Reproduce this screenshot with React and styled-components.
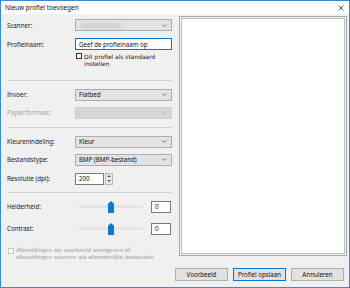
import React from 'react';
import styled, { createGlobalStyle } from 'styled-components';

const Global = createGlobalStyle`
  html, body { margin: 0; padding: 0; background: #ffffff; }
  body { font-family: "Noto Sans", "Open Sans", sans-serif; }
  * { box-sizing: border-box; }
`;

const FONT = `"Noto Sans", "Open Sans", "DejaVu Sans", sans-serif`;

const Window = styled.div`
  width: 350px;
  height: 288px;
  border: 1px solid #3a88d6;
  background: #f0f0f0;
  display: flex;
  flex-direction: column;
  font-family: ${FONT};
  font-size: 6.2px;
  color: #1b1b1b;
`;

const TitleBar = styled.div`
  height: 13px;
  background: #ffffff;
  display: flex;
  align-items: center;
  justify-content: space-between;
  padding: 0 5px 0 4px;
  font-size: 6.4px;
  color: #111;
`;

const Main = styled.div`
  height: 254px;
  display: flex;
`;

const LeftColumn = styled.div`
  width: 172px;
  padding: 5px 0 0 6px;
  display: flex;
  flex-direction: column;
`;

const FieldRow = styled.div`
  display: grid;
  grid-template-columns: 68px 97px;
  align-items: center;
  height: 12px;
  margin-top: ${p => p.$mt || 0}px;
`;

const Label = styled.span`
  color: ${p => (p.$disabled ? '#a3a3a3' : '#1b1b1b')};
  white-space: nowrap;
`;

const Combo = styled.div`
  height: 12px;
  border: 1px solid ${p => (p.$disabled ? '#cfcfcf' : '#adadad')};
  background: ${p => (p.$disabled ? '#d6d6d6' : '#e3e3e3')};
  display: flex;
  align-items: center;
  justify-content: space-between;
  padding: 0 4px 0 3px;
  color: #111;
  overflow: hidden;
`;

const Blurred = styled.span`
  display: block;
  width: 40px;
  height: 5px;
  background: #d2d2d2;
  filter: blur(1.2px);
  margin-left: 2px;
`;

const TextInput = styled.div`
  height: 12px;
  border: 1px solid ${p => (p.$focused ? '#0078d7' : '#7a7a7a')};
  background: #ffffff;
  display: flex;
  align-items: center;
  padding-left: 3px;
  width: ${p => (p.$w ? `${p.$w}px` : 'auto')};
  color: #111;
`;

const CheckRow = styled.div`
  display: flex;
  align-items: flex-start;
  gap: 2px;
  margin-top: ${p => p.$mt || 0}px;
  margin-left: ${p => p.$ml || 0}px;
  color: ${p => (p.$disabled ? '#9c9c9c' : '#1b1b1b')};
`;

const CheckText = styled.span`
  font-family: "DejaVu Sans", "Noto Sans", sans-serif;
  font-size: ${p => (p.$small ? 5.5 : 5.95)}px;
  line-height: 7px;
  margin-top: -0.5px;
`;

const CheckBox = styled.span`
  flex: none;
  width: 6px;
  height: 6px;
  border: 1px solid ${p => (p.$disabled ? '#c4c4c4' : '#333333')};
  background: #ffffff;
`;

const Separator = styled.div`
  height: 1px;
  background: #d2d2d2;
  margin: ${p => p.$mt || 0}px 0 0 1px;
  width: 164px;
`;

const SpinWrap = styled.div`
  display: flex;
  gap: 1px;
  height: 12px;
`;

const Spinner = styled.div`
  width: 8px;
  height: 12px;
  border: 1px solid #b8b8b8;
  background: #e9e9e9;
  display: flex;
  flex-direction: column;
  align-items: center;
  justify-content: space-around;
`;

const SliderCell = styled.div`
  display: flex;
  align-items: center;
  justify-content: space-between;
  height: 12px;
`;

const Track = styled.div`
  position: relative;
  margin-left: 4px;
  width: 64px;
  height: 3px;
  background: #e4e4e4;
`;

const Thumb = styled.span`
  position: absolute;
  left: 29px;
  top: -4px;
  width: 6px;
  height: 12px;
  background: #0a78d7;
  clip-path: polygon(50% 0, 100% 22%, 100% 100%, 0 100%, 0 22%);
`;

const ValueBox = styled.div`
  width: 20px;
  height: 12px;
  border: 1px solid #7a7a7a;
  background: #ffffff;
  display: flex;
  align-items: center;
  padding-left: 3px;
  margin-right: 1px;
`;

const PreviewFrame = styled.div`
  margin: 2px 0 0 6px;
  width: 168px;
  height: 240px;
  border: 1px solid #a9a9a9;
  background: #f4f4f4;
  padding: 1px;
  display: flex;
`;

const PreviewInner = styled.div`
  flex: 1;
  border: 1px solid #bdbdbd;
  background: #ffffff;
`;

const ButtonBar = styled.div`
  display: flex;
  justify-content: flex-end;
  gap: 5px;
  padding-right: 5px;
`;

const Button = styled.div`
  width: 53px;
  height: 13px;
  border: 1px solid ${p => (p.$default ? '#0078d7' : '#adadad')};
  background: #e1e1e1;
  display: flex;
  align-items: center;
  justify-content: center;
  color: #111;
`;

const Chevron = ({ color = '#555' }) => (
  <svg width="5" height="3" viewBox="0 0 5 3">
    <path d="M0.5 0.5 L2.5 2.5 L4.5 0.5" fill="none" stroke={color} strokeWidth="0.8" />
  </svg>
);

const Arrow = ({ up }) => (
  <svg width="4" height="2" viewBox="0 0 4 2">
    <path d={up ? 'M0 2 L2 0 L4 2 Z' : 'M0 0 L2 2 L4 0 Z'} fill="#555" />
  </svg>
);

const CloseIcon = () => (
  <svg width="6" height="6" viewBox="0 0 6 6">
    <path d="M0.5 0.5 L5.5 5.5 M5.5 0.5 L0.5 5.5" stroke="#333" strokeWidth="0.8" />
  </svg>
);

const Slider = () => (
  <SliderCell>
    <Track>
      <Thumb />
    </Track>
    <ValueBox>0</ValueBox>
  </SliderCell>
);

export default function App() {
  return (
    <>
      <Global />
      <Window>
        <TitleBar>
          <span>Nieuw profiel toevoegen</span>
          <CloseIcon />
        </TitleBar>
        <Main>
          <LeftColumn>
            <FieldRow>
              <Label>Scanner:</Label>
              <Combo>
                <Blurred />
                <Chevron />
              </Combo>
            </FieldRow>
            <FieldRow $mt={7}>
              <Label>Profielnaam:</Label>
              <TextInput $focused>Geef de profielnaam op</TextInput>
            </FieldRow>
            <CheckRow $mt={3} $ml={69}>
              <CheckBox />
              <CheckText>Dit profiel als standaard<br />instellen</CheckText>
            </CheckRow>
            <Separator $mt={13} />
            <FieldRow $mt={8}>
              <Label>Invoer:</Label>
              <Combo>
                <span>Flatbed</span>
                <Chevron />
              </Combo>
            </FieldRow>
            <FieldRow $mt={6}>
              <Label $disabled>Papierformaat:</Label>
              <Combo $disabled>
                <span />
                <Chevron color="#a8a8a8" />
              </Combo>
            </FieldRow>
            <Separator $mt={8} />
            <FieldRow $mt={8}>
              <Label>Kleurenindeling:</Label>
              <Combo>
                <span>Kleur</span>
                <Chevron />
              </Combo>
            </FieldRow>
            <FieldRow $mt={6}>
              <Label>Bestandstype:</Label>
              <Combo>
                <span>BMP (BMP-bestand)</span>
                <Chevron />
              </Combo>
            </FieldRow>
            <FieldRow $mt={7}>
              <Label>Resolutie (dpi):</Label>
              <SpinWrap>
                <TextInput $w={29}>200</TextInput>
                <Spinner>
                  <Arrow up />
                  <Arrow />
                </Spinner>
              </SpinWrap>
            </FieldRow>
            <Separator $mt={7} />
            <FieldRow $mt={8}>
              <Label>Helderheid:</Label>
              <Slider />
            </FieldRow>
            <FieldRow $mt={10}>
              <Label>Contrast:</Label>
              <Slider />
            </FieldRow>
            <CheckRow $mt={13} $ml={1} $disabled>
              <CheckBox $disabled />
              <CheckText $small>Afbeeldingen als voorbeeld weergeven of<br />afbeeldingen scannen als afzonderlijke bestanden</CheckText>
            </CheckRow>
          </LeftColumn>
          <PreviewFrame>
            <PreviewInner />
          </PreviewFrame>
        </Main>
        <ButtonBar>
          <Button>Voorbeeld</Button>
          <Button $default>Profiel opslaan</Button>
          <Button>Annuleren</Button>
        </ButtonBar>
      </Window>
    </>
  );
}
